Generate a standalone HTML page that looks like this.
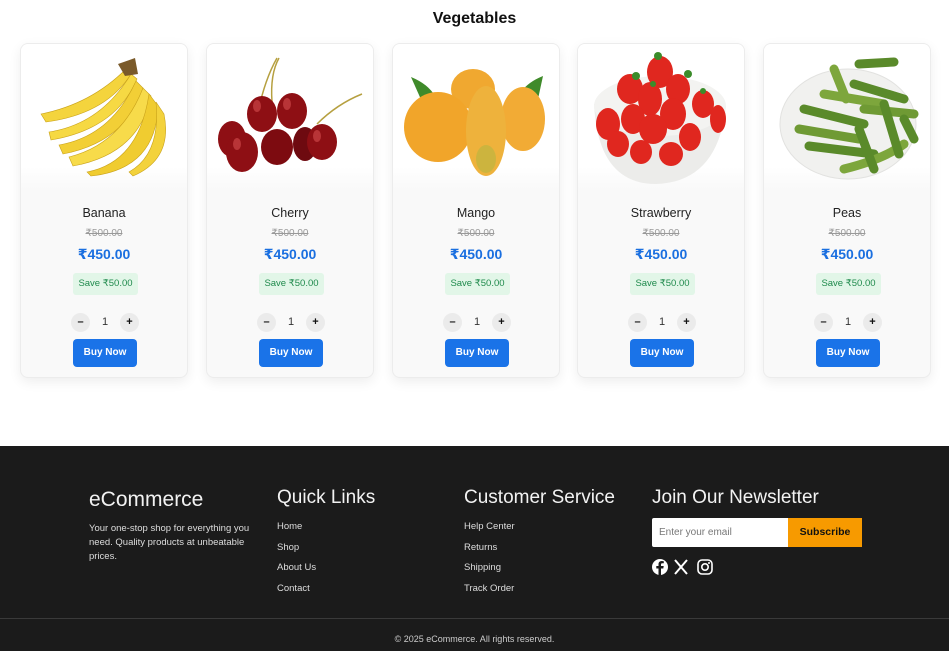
<!DOCTYPE html>
<html><head><meta charset="utf-8"><style>
*{margin:0;padding:0;box-sizing:border-box}
body{width:949px;height:651px;overflow:hidden;background:#fff;font-family:"Liberation Sans","DejaVu Sans",sans-serif;position:relative;color:#222}
h2{position:absolute;top:10px;left:0;width:949px;text-align:center;font-size:16px;font-weight:bold;color:#111}
.card{position:absolute;top:43px;width:168px;height:335px;background:#f9f9f9;border:1px solid #ececec;border-radius:8px;box-shadow:0 4px 12px rgba(0,0,0,.07);overflow:hidden}
.card svg{position:absolute;left:0;top:0}
.img{position:absolute;left:0;top:0;width:168px;height:145px;background:linear-gradient(#fff 85%,#f9f9f9)}
.t{position:absolute;left:0;width:100%;text-align:center}
.name{top:162px;font-size:12.5px;color:#222}
.old{top:184px;font-size:10px;color:#999;text-decoration:line-through}
.price{top:202px;font-size:14px;font-weight:bold;color:#1a6fe0}
.save{position:absolute;top:229px;left:52px;width:65px;height:22px;background:#e2f6e8;border-radius:3px;font-size:9.5px;color:#1f8a4c;text-align:center;line-height:22px}
.q{position:absolute;top:269px;width:19px;height:19px;border-radius:50%;background:#ebebeb;font-size:11px;font-weight:bold;text-align:center;line-height:19px;color:#111}
.qn{position:absolute;top:272px;left:78px;width:12px;text-align:center;font-size:11px;color:#333}
.buy{position:absolute;top:295px;left:52px;width:64px;height:28px;background:#1a73e8;border-radius:4px;color:#fff;font-size:10px;font-weight:bold;text-align:center;line-height:28px}
footer{position:absolute;left:0;top:446px;width:949px;height:205px;background:#1b1b1b;color:#eee}
footer .c{position:absolute;top:41px}
footer h3{font-size:19px;font-weight:normal;color:#f2f2f2;white-space:nowrap}
footer p{font-size:9.5px;line-height:14px;color:#ddd;margin-top:10px;width:170px}
footer ul{list-style:none;margin-top:12px}
footer li{font-size:9.5px;color:#ddd;height:20.5px}
.hr{position:absolute;top:172px;left:0;width:949px;border-top:1px solid #3a3a3a}
.copy{position:absolute;top:188px;width:949px;text-align:center;font-size:9px;color:#ccc}
</style></head><body>
<h2>Vegetables</h2>

<div class="card" style="left:20px"><div class="img"></div>
<svg width="168" height="145" viewBox="0 0 168 145">
<g stroke="#c9a21a" stroke-width=".6">
<path d="M20 70 Q70 60 105 25 L110 30 Q85 70 25 78Z" fill="#f4d43d"/>
<path d="M28 88 Q80 80 110 30 L116 35 Q95 85 30 96Z" fill="#f6d943"/>
<path d="M38 101 Q90 92 115 37 L122 44 Q105 98 42 110Z" fill="#f2cf36"/>
<path d="M48 113 Q100 100 122 44 L130 52 Q118 110 52 122Z" fill="#f7db4a"/>
<path d="M66 128 Q118 118 128 50 L137 62 Q135 125 70 132Z" fill="#f0cc30"/>
<path d="M108 128 Q140 110 135 58 L143 70 Q152 115 112 132Z" fill="#f3d23c"/>
</g>
<path d="M97 20 L114 14 L117 30 L104 32Z" fill="#7a5a2a"/>
</svg>
<div class="t name">Banana</div><div class="t old">₹500.00</div><div class="t price">₹450.00</div>
<div class="save">Save ₹50.00</div><div class="q" style="left:50px">–</div><div class="qn">1</div><div class="q" style="left:99px">+</div><div class="buy">Buy Now</div></div>

<div class="card" style="left:206px"><div class="img"></div>
<svg width="168" height="145" viewBox="0 0 168 145">
<g stroke="#b6a040" stroke-width="1.5" fill="none"><path d="M65 58 Q63 30 72 14"/><path d="M51 68 Q58 35 70 14"/><path d="M110 80 Q130 60 155 50"/></g>
<g fill="#8e0f14">
<ellipse cx="25" cy="95" rx="14" ry="18"/><ellipse cx="55" cy="70" rx="15" ry="18"/><ellipse cx="85" cy="67" rx="15" ry="18"/>
<ellipse cx="35" cy="108" rx="16" ry="20"/><ellipse cx="70" cy="103" rx="16" ry="18" fill="#7d0b10"/><ellipse cx="98" cy="100" rx="12" ry="17" fill="#6e0a10"/><ellipse cx="115" cy="98" rx="15" ry="18"/>
</g>
<g fill="#e25a5a" opacity=".5"><ellipse cx="50" cy="62" rx="4" ry="6"/><ellipse cx="80" cy="60" rx="4" ry="6"/><ellipse cx="30" cy="100" rx="4" ry="6"/><ellipse cx="110" cy="92" rx="4" ry="6"/></g>
</svg>
<div class="t name">Cherry</div><div class="t old">₹500.00</div><div class="t price">₹450.00</div>
<div class="save">Save ₹50.00</div><div class="q" style="left:50px">–</div><div class="qn">1</div><div class="q" style="left:99px">+</div><div class="buy">Buy Now</div></div>

<div class="card" style="left:392px"><div class="img"></div>
<svg width="168" height="145" viewBox="0 0 168 145">
<path d="M18 33 Q35 40 42 52 L30 60Z" fill="#3f8a2a"/><path d="M150 32 Q135 38 128 48 L145 55Z" fill="#3f8a2a"/>
<ellipse cx="80" cy="45" rx="22" ry="20" fill="#f0a830"/>
<ellipse cx="45" cy="83" rx="34" ry="35" fill="#f1a52a"/>
<ellipse cx="130" cy="75" rx="22" ry="32" fill="#f2ab35"/>
<ellipse cx="93" cy="87" rx="20" ry="45" fill="#eeb23c"/>
<ellipse cx="93" cy="115" rx="10" ry="14" fill="#b5b540" opacity=".6"/>
</svg>
<div class="t name">Mango</div><div class="t old">₹500.00</div><div class="t price">₹450.00</div>
<div class="save">Save ₹50.00</div><div class="q" style="left:50px">–</div><div class="qn">1</div><div class="q" style="left:99px">+</div><div class="buy">Buy Now</div></div>

<div class="card" style="left:577px"><div class="img"></div>
<svg width="168" height="145" viewBox="0 0 168 145">
<path d="M16 60 Q20 140 78 140 Q140 138 148 62Z" fill="#ececea"/>
<ellipse cx="82" cy="62" rx="66" ry="30" fill="#f3f3f1"/>
<g fill="#e0271f">
<ellipse cx="82" cy="28" rx="13" ry="16"/><ellipse cx="52" cy="45" rx="13" ry="15"/><ellipse cx="72" cy="55" rx="12" ry="17"/><ellipse cx="100" cy="45" rx="12" ry="15"/><ellipse cx="125" cy="60" rx="11" ry="14"/><ellipse cx="30" cy="80" rx="12" ry="16"/><ellipse cx="55" cy="75" rx="12" ry="15"/><ellipse cx="95" cy="70" rx="13" ry="16"/><ellipse cx="75" cy="85" rx="14" ry="15"/><ellipse cx="40" cy="100" rx="11" ry="13"/><ellipse cx="63" cy="108" rx="11" ry="12"/><ellipse cx="93" cy="110" rx="12" ry="12"/><ellipse cx="112" cy="93" rx="11" ry="14"/><ellipse cx="140" cy="75" rx="8" ry="14"/>
</g>
<g fill="#3b8c2a"><circle cx="80" cy="12" r="4"/><circle cx="58" cy="32" r="4"/><circle cx="110" cy="30" r="4"/><circle cx="125" cy="47" r="3"/><circle cx="75" cy="40" r="3"/></g>
</svg>
<div class="t name">Strawberry</div><div class="t old">₹500.00</div><div class="t price">₹450.00</div>
<div class="save">Save ₹50.00</div><div class="q" style="left:50px">–</div><div class="qn">1</div><div class="q" style="left:99px">+</div><div class="buy">Buy Now</div></div>

<div class="card" style="left:763px"><div class="img"></div>
<svg width="168" height="145" viewBox="0 0 168 145">
<ellipse cx="84" cy="80" rx="68" ry="55" fill="#f1f1ef" stroke="#e2e2e0"/>
<g stroke="#5a8a2a" stroke-width="9" stroke-linecap="round" fill="none">
<path d="M60 50 L120 60" stroke="#7da63c"/><path d="M40 65 L100 80"/><path d="M35 85 L95 95" stroke="#6f9a34"/><path d="M45 102 L110 110"/><path d="M80 125 Q120 115 140 100" stroke="#7da63c"/><path d="M90 40 L140 55"/><path d="M100 65 L150 70" stroke="#6f9a34"/><path d="M95 85 L110 125"/><path d="M120 60 L135 110"/><path d="M70 25 L82 55" stroke="#7da63c"/><path d="M95 20 L130 18"/><path d="M140 75 L150 95"/>
</g>
</svg>
<div class="t name">Peas</div><div class="t old">₹500.00</div><div class="t price">₹450.00</div>
<div class="save">Save ₹50.00</div><div class="q" style="left:50px">–</div><div class="qn">1</div><div class="q" style="left:99px">+</div><div class="buy">Buy Now</div></div>

<footer>
<div class="c" style="left:89px;top:42px"><h3 style="font-size:21px">eCommerce</h3><p>Your one-stop shop for everything you need. Quality products at unbeatable prices.</p></div>
<div class="c" style="left:277px"><h3>Quick Links</h3><ul><li>Home</li><li>Shop</li><li>About Us</li><li>Contact</li></ul></div>
<div class="c" style="left:464px"><h3>Customer Service</h3><ul><li>Help Center</li><li>Returns</li><li>Shipping</li><li>Track Order</li></ul></div>
<div class="c" style="left:652px"><h3>Join Our Newsletter</h3>
<div style="position:absolute;top:31px;left:0;width:136px;height:29px;background:#fff;border-radius:2px 0 0 2px;font-size:10px;color:#777;line-height:29px;padding-left:7px;white-space:nowrap">Enter your email</div>
<div style="position:absolute;top:31px;left:136px;width:74px;height:29px;background:#f79a00;font-size:10.5px;font-weight:bold;color:#111;line-height:29px;text-align:center">Subscribe</div>
<svg style="position:absolute;top:71px;left:0" width="62" height="18" viewBox="0 0 62 18">
<circle cx="8" cy="9" r="8" fill="#fff"/><path d="M9 18 V10.5 H11.3 L11.7 8 H9 V6.5 Q9 5.3 10.3 5.3 H11.8 V3.2 Q10.8 3 9.8 3 Q6.5 3 6.5 6.3 V8 H4.3 V10.5 H6.5 V18Z" fill="#1b1b1b"/>
<path d="M23 2 L35 16 M35 2 L23 16" stroke="#fff" stroke-width="2"/>
<rect x="46" y="2" width="14" height="14" rx="4" fill="none" stroke="#fff" stroke-width="1.6"/><circle cx="53" cy="9" r="3.2" fill="none" stroke="#fff" stroke-width="1.6"/><circle cx="57" cy="5" r="1" fill="#fff"/>
</svg></div>
<div class="hr"></div>
<div class="copy">© 2025 eCommerce. All rights reserved.</div>
</footer>
</body></html>
